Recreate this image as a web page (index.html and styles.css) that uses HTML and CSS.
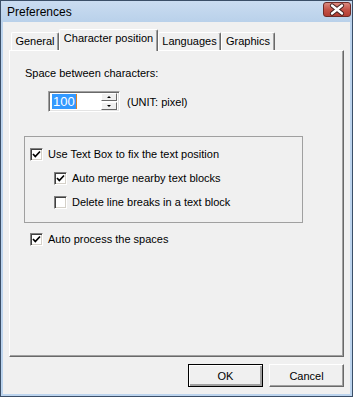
FILE: index.html
```html
<!DOCTYPE html>
<html lang="en">
<head>
    <meta charset="UTF-8">
    <title>Preferences</title>
    <link rel="stylesheet" href="styles.css">
</head>
<body>
    <div class="window">
        <div class="titlebar">
            <span class="title">Preferences</span>
            <span class="close">
                <svg width="28" height="15" viewBox="0 0 28 15">
                    <path d="M9 3.5 L19 11.5 M19 3.5 L9 11.5" stroke="#3c1d1d" stroke-width="4.2" stroke-linecap="round"/>
                    <path d="M9 3.5 L19 11.5 M19 3.5 L9 11.5" stroke="#ffffff" stroke-width="2.4" stroke-linecap="round"/>
                </svg>
            </span>
        </div>

        <div class="client">
            <!-- Tab headers -->
            <div class="tabs">
                <div class="tab tab-general">General</div>
                <div class="tab tab-active">Character position</div>
                <div class="tab tab-lang">Languages</div>
                <div class="tab tab-gfx">Graphics</div>
            </div>

            <div class="panel">
                <div class="space-label">Space between characters:</div>

                <div class="spin-row">
                    <div class="spin">
                        <span class="spin-value"><span class="sel">100</span><span class="caret"></span></span>
                        <span class="spin-btns">
                            <span class="spin-btn"><span class="arrow-up"></span></span>
                            <span class="spin-btn"><span class="arrow-down"></span></span>
                        </span>
                    </div>
                    <span class="unit">(UNIT: pixel)</span>
                </div>

                <div class="group">
                    <div class="check">
                        <span class="box"><svg width="9" height="9" viewBox="0 0 9 9"><path d="M1 4 L3.3 6.5 L8 1.5" fill="none" stroke="#000" stroke-width="1.7"/></svg></span>
                        <span>Use Text Box to fix the text position</span>
                    </div>
                    <div class="check sub">
                        <span class="box"><svg width="9" height="9" viewBox="0 0 9 9"><path d="M1 4 L3.3 6.5 L8 1.5" fill="none" stroke="#000" stroke-width="1.7"/></svg></span>
                        <span>Auto merge nearby text blocks</span>
                    </div>
                    <div class="check sub">
                        <span class="box"></span>
                        <span>Delete line breaks in a text block</span>
                    </div>
                </div>

                <div class="check outer">
                    <span class="box"><svg width="9" height="9" viewBox="0 0 9 9"><path d="M1 4 L3.3 6.5 L8 1.5" fill="none" stroke="#000" stroke-width="1.7"/></svg></span>
                    <span>Auto process the spaces</span>
                </div>
            </div>

            <div class="buttons">
                <button type="button" class="btn btn-default">OK</button>
                <button type="button" class="btn">Cancel</button>
            </div>
        </div>
    </div>
</body>
</html>
```

FILE: styles.css
```css
body {
    margin: 0;
    background-color: #f0f0f0;
    font-family: "Liberation Sans", Arial, sans-serif;
    font-size: 11px;
    color: #000000;
}

.window {
    width: 353px;
    height: 397px;
    box-sizing: border-box;
    border: 1px solid #3b4f68; /* outer frame line */
    background-color: #bcd4ee; /* light blue frame */
    display: flex;
    flex-direction: column;
}

.titlebar {
    height: 21px;
    display: flex;
    align-items: center;
    justify-content: space-between;
    padding: 0 1px 0 6px;
    background: linear-gradient(#cadcf1, #b9d1ea);
}

.title {
    font-size: 12px;
    color: #000000;
    padding-top: 1px;
}

.close {
    display: block;
    width: 28px;
    height: 15px;
    box-sizing: border-box;
    border: 1px solid #6e2b27;
    border-radius: 3px;
    background: linear-gradient(#dc8a7f, #c45348 50%, #b33d33);
    margin-top: -4px;
}

.close svg {
    display: block;
    margin: -1px 0 0 -1px;
}

.client {
    flex: 1;
    margin: 0 2px 2px 2px;
    background-color: #f0f0f0;
    padding: 7px 6px 0 6px;
    display: flex;
    flex-direction: column;
}

/* Tabs */
.tabs {
    display: flex;
    align-items: flex-end;
    padding-left: 2px;
    height: 21px;
}

.tab {
    box-sizing: border-box;
    height: 18px;
    border-top: 1px solid #ffffff;
    border-left: 1px solid #ffffff;
    border-right: 1px solid #696969;
    box-shadow: inset -1px 0 0 #a0a0a0;
    border-radius: 2px 2px 0 0;
    background-color: #f0f0f0;
    text-align: center;
    line-height: 16px;
}

.tab-general {
    width: 48px;
}

.tab-active {
    position: relative;
    z-index: 2;
    width: 99px;
    height: 22px;
    margin-bottom: -1px;
    line-height: 16px;
}

.tab-lang {
    width: 63px;
}

.tab-gfx {
    width: 54px;
}

.panel {
    height: 307px;
    box-sizing: border-box;
    border-top: 1px solid #ffffff;
    border-left: 1px solid #ffffff;
    border-right: 1px solid #696969;
    border-bottom: 1px solid #696969;
    box-shadow: inset -1px -1px 0 #a0a0a0;
    padding-left: 14px;
}

.space-label {
    margin-top: 16px;
    margin-left: 1px;
    line-height: 13px;
}

/* Spin box */
.spin-row {
    display: flex;
    align-items: center;
    margin-top: 11px;
    margin-left: 24px;
}

.spin {
    width: 72px;
    height: 21px;
    box-sizing: border-box;
    border-top: 1px solid #a0a0a0;
    border-left: 1px solid #a0a0a0;
    border-right: 1px solid #ffffff;
    border-bottom: 1px solid #ffffff;
    box-shadow: inset 1px 1px 0 #696969, inset -1px -1px 0 #e3e3e3;
    background-color: #ffffff;
    display: flex;
    align-items: center;
    justify-content: space-between;
    padding: 0 2px 0 3px;
}

.spin-value {
    display: flex;
    align-items: center;
}

.sel {
    background-color: #3399ff;
    color: #ffffff;
    font-size: 13px;
    line-height: 15px;
    padding: 0 1px;
}

.caret {
    width: 1px;
    height: 15px;
    background-color: #d9822b;
}

.spin-btns {
    display: flex;
    flex-direction: column;
    gap: 1px;
}

.spin-btn {
    width: 16px;
    height: 8px;
    box-sizing: border-box;
    border-top: 1px solid #ffffff;
    border-left: 1px solid #ffffff;
    border-right: 1px solid #696969;
    border-bottom: 1px solid #696969;
    background-color: #f0f0f0;
    display: flex;
    align-items: center;
    justify-content: center;
}

.arrow-up {
    border-left: 2px solid transparent;
    border-right: 2px solid transparent;
    border-bottom: 2px solid #000000;
}

.arrow-down {
    border-left: 2px solid transparent;
    border-right: 2px solid transparent;
    border-top: 2px solid #000000;
}

.unit {
    margin-left: 7px;
}

/* Group box and check boxes */
.group {
    width: 279px;
    height: 87px;
    box-sizing: border-box;
    border: 1px solid #a0a0a0;
    margin-top: 24px;
    padding: 11px 0 0 5px;
}

.check {
    display: flex;
    align-items: center;
    height: 13px;
    gap: 5px;
    margin-bottom: 11px;
    line-height: 13px;
}

.check.sub {
    margin-left: 24px;
}

.check.outer {
    margin-top: 10px;
    margin-left: 6px;
}

.box {
    width: 13px;
    height: 13px;
    box-sizing: border-box;
    border-top: 1px solid #808080;
    border-left: 1px solid #808080;
    border-right: 1px solid #ffffff;
    border-bottom: 1px solid #ffffff;
    box-shadow: inset 1px 1px 0 #404040, inset -1px -1px 0 #d4d0c8;
    background-color: #ffffff;
    display: flex;
    align-items: center;
    justify-content: center;
}

.box svg {
    display: block;
}

/* Dialog buttons */
.buttons {
    display: flex;
    justify-content: flex-end;
    gap: 6px;
    margin-top: 7px;
}

.btn {
    width: 75px;
    height: 23px;
    box-sizing: border-box;
    font-family: "Liberation Sans", Arial, sans-serif;
    font-size: 11px;
    color: #000000;
    background-color: #f0f0f0;
    border-top: 1px solid #ffffff;
    border-left: 1px solid #ffffff;
    border-right: 1px solid #696969;
    border-bottom: 1px solid #696969;
    box-shadow: inset -1px -1px 0 #a0a0a0;
    padding: 0;
}

.btn-default {
    border: 1px solid #000000;
    box-shadow: inset 1px 1px 0 #ffffff, inset -2px -2px 0 #a0a0a0;
}
```
